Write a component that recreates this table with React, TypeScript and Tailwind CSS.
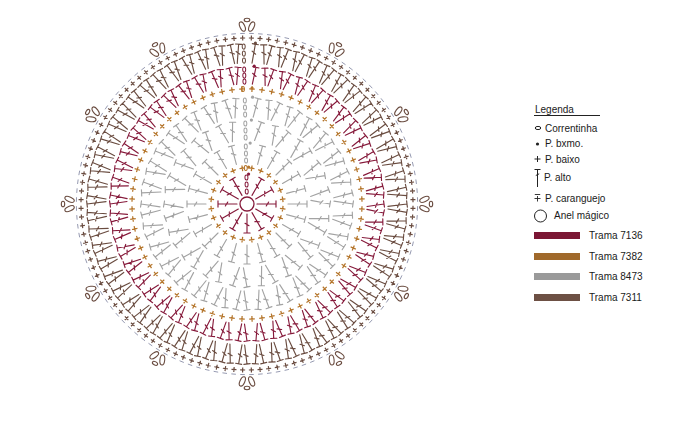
import React from "react";

const CX = 247;
const CY = 204;
const MAROON = "#861a3b";
const ORANGE = "#b5762c";
const GRAY = "#a3a3a3";
const BROWN = "#6a4c40";

const rad = (d: number) => (d * Math.PI) / 180;
const pt = (r: number, deg: number): [number, number] => [
  CX + r * Math.sin(rad(deg)),
  CY - r * Math.cos(rad(deg)),
];
const f = (n: number) => n.toFixed(2);

function dcPath(a0: number, r0: number, a1: number, r1: number) {
  const [x0, y0] = pt(r0, a0);
  const [x1, y1] = pt(r1, a1);
  const dx = x1 - x0;
  const dy = y1 - y0;
  const L = Math.hypot(dx, dy);
  const ux = dx / L;
  const uy = dy / L;
  const px = -uy;
  const py = ux;
  const bar = 3.1;
  const mx = x0 + dx * 0.55;
  const my = y0 + dy * 0.55;
  const tk = 2;
  return (
    `M${f(x0)} ${f(y0)}L${f(x1)} ${f(y1)}` +
    `M${f(x1 + px * bar)} ${f(y1 + py * bar)}L${f(x1 - px * bar)} ${f(y1 - py * bar)}` +
    `M${f(mx + px * tk - ux * 1.2)} ${f(my + py * tk - uy * 1.2)}L${f(mx - px * tk + ux * 1.2)} ${f(my - py * tk + uy * 1.2)}`
  );
}

function plusPath(r: number, a: number, s = 2.6) {
  const [x, y] = pt(r, a);
  const ux = Math.sin(rad(a));
  const uy = -Math.cos(rad(a));
  const px = -uy;
  const py = ux;
  return (
    `M${f(x - ux * s)} ${f(y - uy * s)}L${f(x + ux * s)} ${f(y + uy * s)}` +
    `M${f(x - px * s)} ${f(y - py * s)}L${f(x + px * s)} ${f(y + py * s)}`
  );
}

function barPath(r: number, a: number, s = 2.6) {
  const [x, y] = pt(r, a);
  const ux = Math.sin(rad(a));
  const uy = -Math.cos(rad(a));
  const px = -uy;
  const py = ux;
  return `M${f(x - px * s)} ${f(y - py * s)}L${f(x + px * s)} ${f(y + py * s)}`;
}

type Round = { n: number; r0: number; r1: number; color: string; v: boolean };

function DcRound({ n, r0, r1, color, v }: Round) {
  const s = 360 / n;
  let d = "";
  for (let i = 1; i < n; i++) {
    const a = i * s;
    const off = v ? (i % 2 === 0 ? 0.32 * s : -0.32 * s) : 0;
    d += dcPath(a + off, r0, a, r1);
  }
  const chains: React.ReactNode[] = [];
  const steps = 3;
  for (let k = 0; k < steps; k++) {
    const r = r0 + 2.5 + ((r1 - r0 - 5) * k) / (steps - 1);
    const [x, y] = pt(r, -1.2);
    chains.push(
      <ellipse key={k} cx={x} cy={y} rx={1.5} ry={2.6} transform={`rotate(-1.2 ${x} ${y})`} fill="none" stroke={color} strokeWidth={1} />
    );
  }
  const [dx, dy] = pt(r1 + 1, 3);
  return (
    <g>
      <path d={d} stroke={color} strokeWidth={1.15} fill="none" strokeLinecap="round" />
      {chains}
      <circle cx={dx} cy={dy} r={1.6} fill={color} />
    </g>
  );
}

function ScRound({ n, r, color }: { n: number; r: number; color: string }) {
  const s = 360 / n;
  let d = "";
  for (let i = 0; i < n; i++) {
    const a = i * s + s / 2;
    d += plusPath(r, a, 2.8);
  }
  const [x, y] = pt(r, -2);
  const [dx, dy] = pt(r + 1, 2.5);
  return (
    <g>
      <path d={d} stroke={color} strokeWidth={1.25} fill="none" />
      <ellipse cx={x} cy={y} rx={1.5} ry={2.5} transform={`rotate(-2 ${x} ${y})`} fill="none" stroke={color} strokeWidth={1} />
      <circle cx={dx} cy={dy} r={1.6} fill={color} />
    </g>
  );
}

function CrabRound({ n, r }: { n: number; r: number }) {
  const s = 360 / n;
  let d = "";
  let b = "";
  for (let i = 0; i < n; i++) {
    const a = i * s + s / 2;
    d += plusPath(r, a, 2.5);
    b += barPath(r + 4.6, a, 2.3);
  }
  return (
    <g>
      <path d={d} stroke={BROWN} strokeWidth={1.2} fill="none" />
      <path d={b} stroke="#8a8fa8" strokeWidth={0.9} fill="none" />
    </g>
  );
}

function Picot({ a }: { a: number }) {
  const items: React.ReactNode[] = [];
  const defs = [
    { r: 177.5, da: -1.5, rot: -24, rx: 2.4, ry: 5 },
    { r: 177.5, da: 1.5, rot: 24, rx: 2.4, ry: 5 },
    { r: 184, da: 0, rot: 90, rx: 1.7, ry: 2.8 },
  ];
  defs.forEach((e, k) => {
    const [x, y] = pt(e.r, a + e.da);
    items.push(
      <ellipse key={k} cx={x} cy={y} rx={e.rx} ry={e.ry} transform={`rotate(${a + e.rot} ${x} ${y})`} fill="none" stroke={BROWN} strokeWidth={1.1} />
    );
  });
  return <g>{items}</g>;
}

function Chart() {
  const picots = Array.from({ length: 12 }, (_, i) => i * 30);
  return (
    <svg width={534} height={446} viewBox="0 0 534 446" className="shrink-0">
      <circle cx={CX} cy={CY} r={7} fill="none" stroke={MAROON} strokeWidth={1.3} />
      <DcRound n={12} r0={10} r1={29} color={MAROON} v={false} />
      <ScRound n={24} r={36} color={ORANGE} />
      <DcRound n={24} r0={41} r1={60} color={GRAY} v={false} />
      <DcRound n={36} r0={64} r1={83} color={GRAY} v={true} />
      <DcRound n={60} r0={87} r1={106} color={GRAY} v={true} />
      <ScRound n={72} r={115} color={ORANGE} />
      <DcRound n={96} r0={120} r1={137} color={MAROON} v={true} />
      <DcRound n={120} r0={141} r1={160} color={BROWN} v={true} />
      <CrabRound n={120} r={166} />
      {picots.map((a) => (
        <Picot key={a} a={a} />
      ))}
    </svg>
  );
}

function Row({ h, children }: { h: string; children: React.ReactNode }) {
  return <div className={`flex items-center ${h}`}>{children}</div>;
}

export default function App() {
  return (
    <div
      className="w-[686px] h-[446px] bg-white flex overflow-hidden text-[10px] text-[#1a1a1a]"
      style={{ fontFamily: '"Liberation Sans", Arial, sans-serif' }}
    >
      <Chart />
      <div className="flex flex-col pt-[104px]">
        <div className="w-[66px] h-[12px] leading-[11px] border-b border-[#222] pl-[1px]">Legenda</div>
        <div className="h-[4px]" />
        <Row h="h-[16px]">
          <svg width={11} height={8} className="shrink-0">
            <ellipse cx={4} cy={4} rx={2.8} ry={1.6} fill="none" stroke="#222" strokeWidth={1} />
          </svg>
          <span>Correntinha</span>
        </Row>
        <Row h="h-[15px]">
          <svg width={11} height={8} className="shrink-0">
            <circle cx={3.5} cy={4} r={1.6} fill="#222" />
          </svg>
          <span>P. bxmo.</span>
        </Row>
        <Row h="h-[16px]">
          <svg width={11} height={8} className="shrink-0">
            <path d="M0.5 4H6.5M3.5 1V7" stroke="#222" strokeWidth={1} />
          </svg>
          <span>P. baixo</span>
        </Row>
        <Row h="h-[22px]">
          <svg width={10} height={20} className="shrink-0">
            <path d="M0.5 1.5H6.5M3.5 1.5V19M1.8 7.5L5.2 5.8" stroke="#222" strokeWidth={1} fill="none" />
          </svg>
          <span className="-mt-[2px]">P. alto</span>
        </Row>
        <Row h="h-[18px]">
          <svg width={11} height={10} className="shrink-0">
            <path d="M0.8 1.5H6.2M0.5 5.5H6.5M3.5 3V8.5" stroke="#222" strokeWidth={0.9} fill="none" />
          </svg>
          <span>P. caranguejo</span>
        </Row>
        <Row h="h-[17px]">
          <svg width={20} height={14} className="shrink-0">
            <circle cx={6.5} cy={7} r={6} fill="none" stroke="#222" strokeWidth={1} />
          </svg>
          <span>Anel mágico</span>
        </Row>
        <Row h="h-[22px]">
          <div className="w-[46px] h-[7px] bg-[#7b1634] mr-[9px]" />
          <span>Trama 7136</span>
        </Row>
        <Row h="h-[20px]">
          <div className="w-[46px] h-[7px] bg-[#a0692b] mr-[9px]" />
          <span>Trama 7382</span>
        </Row>
        <Row h="h-[21px]">
          <div className="w-[46px] h-[7px] bg-[#9a9a9a] mr-[9px]" />
          <span>Trama 8473</span>
        </Row>
        <Row h="h-[21px]">
          <div className="w-[46px] h-[7px] bg-[#6d5044] mr-[9px]" />
          <span>Trama 7311</span>
        </Row>
      </div>
    </div>
  );
}
